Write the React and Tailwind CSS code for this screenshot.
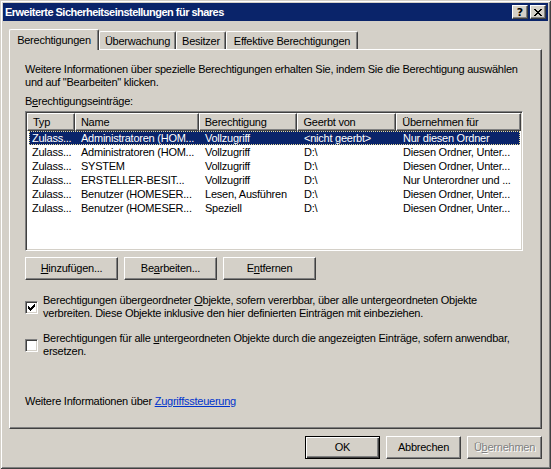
import React from 'react';

const raised =
  'border border-t-white border-l-white border-r-[#404040] border-b-[#404040] shadow-[inset_-1px_-1px_0_#808080]';

const columns = [
  { label: 'Typ', w: 'w-[48px]' },
  { label: 'Name', w: 'w-[124px]' },
  { label: 'Berechtigung', w: 'w-[99px]' },
  { label: 'Geerbt von', w: 'w-[99px]' },
  { label: 'Übernehmen für', w: 'w-[125px]' },
];

const rows = [
  ['Zulass...', 'Administratoren (HOM...', 'Vollzugriff', '<nicht geerbt>', 'Nur diesen Ordner'],
  ['Zulass...', 'Administratoren (HOM...', 'Vollzugriff', 'D:\\', 'Diesen Ordner, Unter...'],
  ['Zulass...', 'SYSTEM', 'Vollzugriff', 'D:\\', 'Diesen Ordner, Unter...'],
  ['Zulass...', 'ERSTELLER-BESIT...', 'Vollzugriff', 'D:\\', 'Nur Unterordner und ...'],
  ['Zulass...', 'Benutzer (HOMESER...', 'Lesen, Ausführen', 'D:\\', 'Diesen Ordner, Unter...'],
  ['Zulass...', 'Benutzer (HOMESER...', 'Speziell', 'D:\\', 'Diesen Ordner, Unter...'],
];

const rowWidths = ['w-[46px]', 'w-[124px]', 'w-[99px]', 'w-[99px]', 'w-[123px]'];

const PushButton = ({ children, className = '' }) => (
  <div className={`${raised} h-[23px] flex items-center justify-center bg-[#d4d0c8] ${className}`}>
    {children}
  </div>
);

const Checkbox = ({ checked }) => (
  <div className="w-[13px] h-[13px] shrink-0 bg-white border border-t-[#808080] border-l-[#808080] border-r-white border-b-white shadow-[inset_1px_1px_0_#404040,inset_-1px_-1px_0_#d4d0c8] flex items-center justify-center">
    {checked && (
      <svg width="7" height="7" viewBox="0 0 7 7" shapeRendering="crispEdges">
        <path d="M0 2 L2 4 L7 -1 L7 2 L2 7 L0 5 Z" fill="#000" />
      </svg>
    )}
  </div>
);

export default function App() {
  return (
    <div className="w-[551px] h-[469px] overflow-hidden bg-[#d4d0c8] p-[3px] flex flex-col text-black text-[11px] leading-[13px] tracking-[-0.24px] font-['Liberation_Sans',Arial,sans-serif] shadow-[inset_1px_1px_0_#d4d0c8,inset_-1px_-1px_0_#404040,inset_2px_2px_0_#ffffff,inset_-2px_-2px_0_#808080]">
      {/* Title bar */}
      <div className="h-[18px] bg-[#0a246a] flex items-center pl-[2px] pr-[2px]">
        <span className="text-white font-bold tracking-[-0.52px]">Erweiterte Sicherheitseinstellungen für shares</span>
        <div className="ml-auto flex gap-[2px]">
          <div className={`${raised} w-[16px] h-[14px] bg-[#d4d0c8] flex items-center justify-center`}>
            <span className="font-bold text-[11px] leading-[11px] tracking-normal font-['DejaVu_Sans',sans-serif]">?</span>
          </div>
          <div className={`${raised} w-[16px] h-[14px] bg-[#d4d0c8] flex items-center justify-center`}>
            <svg width="8" height="7" viewBox="0 0 8 7" shapeRendering="crispEdges">
              <path d="M0 0h2v1h-2z M6 0h2v1h-2z M1 1h2v1h-2z M5 1h2v1h-2z M2 2h4v1h-4z M3 3h2v1h-2z M2 4h4v1h-4z M1 5h2v1h-2z M5 5h2v1h-2z M0 6h2v1h-2z M6 6h2v1h-2z" fill="#000" />
            </svg>
          </div>
        </div>
      </div>

      {/* Tabs */}
      <div className="ml-[6px] mt-[8px] h-[20px] flex items-end relative z-10">
        <div className="w-[90px] h-[21px] -mb-px bg-[#d4d0c8] border-l border-t border-white border-r border-r-[#404040] shadow-[inset_-1px_0_0_#808080] rounded-t-[2px] flex justify-center pt-[4px]">
          Berechtigungen
        </div>
        <div className="w-[77px] h-[18px] border-l border-t border-white border-r border-r-[#404040] shadow-[inset_-1px_0_0_#808080] rounded-t-[2px] flex justify-center pt-[3px]">
          Überwachung
        </div>
        <div className="w-[50px] h-[18px] border-l border-t border-white border-r border-r-[#404040] shadow-[inset_-1px_0_0_#808080] rounded-t-[2px] flex justify-center pt-[3px]">
          Besitzer
        </div>
        <div className="w-[132px] h-[18px] border-l border-t border-white border-r border-r-[#404040] shadow-[inset_-1px_0_0_#808080] rounded-t-[2px] flex justify-center pt-[3px]">
          Effektive Berechtigungen
        </div>
      </div>

      {/* Tab panel */}
      <div className={`${raised} ml-[6px] w-[533px] h-[380px] px-[15px] pt-[13px] flex flex-col`}>
        <p className="whitespace-nowrap">
          Weitere Informationen über spezielle Berechtigungen erhalten Sie, indem Sie die Berechtigung auswählen
          <br />
          und auf "Bearbeiten" klicken.
        </p>
        <div className="mt-[6px]">
          B<span className="underline">e</span>rechtigungseinträge:
        </div>

        {/* List view */}
        <div className="mt-[3px] w-[498px] h-[140px] bg-white border border-t-[#808080] border-l-[#808080] border-r-white border-b-white shadow-[inset_1px_1px_0_#404040,inset_-1px_-1px_0_#d4d0c8] p-px">
          <div className="flex h-[18px]">
            {columns.map((c) => (
              <div
                key={c.label}
                className={`${c.w} h-[18px] bg-[#d4d0c8] border border-t-white border-l-white border-r-[#404040] border-b-[#404040] shadow-[inset_-1px_-1px_0_#808080] pl-[5px] flex items-center whitespace-nowrap`}
              >
                {c.label}
              </div>
            ))}
          </div>
          {rows.map((r, i) => (
            <div key={i} className="flex h-[14px] leading-[14px]">
              <div className="w-[2px]" />
              <div
                className={`flex ${i === 0 ? 'bg-[#0a246a] text-white outline outline-1 outline-dotted outline-[#e8dc9a] -outline-offset-1' : ''}`}
              >
                {r.map((cell, j) => (
                  <div key={j} className={`${rowWidths[j]} ${j === 0 ? 'pl-[3px]' : 'pl-[6px]'} whitespace-nowrap overflow-hidden`}>
                    {cell}
                  </div>
                ))}
              </div>
            </div>
          ))}
        </div>

        {/* Buttons */}
        <div className="mt-[6px] flex gap-[6px]">
          <PushButton className="w-[93px]">
            <span>
              <span className="underline">H</span>inzufügen...
            </span>
          </PushButton>
          <PushButton className="w-[93px]">
            <span>
              Be<span className="underline">a</span>rbeiten...
            </span>
          </PushButton>
          <PushButton className="w-[93px]">
            <span>
              E<span className="underline">n</span>tfernen
            </span>
          </PushButton>
        </div>

        {/* Checkboxes */}
        <div className="mt-[14px] flex items-center gap-[5px]">
          <Checkbox checked />
          <div className="whitespace-nowrap">
            Berechtigungen übergeordneter <span className="underline">O</span>bjekte, sofern vererbbar, über alle untergeordneten Objekte
            <br />
            verbreiten. Diese Objekte inklusive den hier definierten Einträgen mit einbeziehen.
          </div>
        </div>
        <div className="mt-[12px] flex items-center gap-[5px]">
          <Checkbox />
          <div className="whitespace-nowrap">
            Berechtigungen für alle <span className="underline">u</span>ntergeordneten Objekte durch die angezeigten Einträge, sofern anwendbar,
            <br />
            ersetzen.
          </div>
        </div>

        <div className="mt-[37px] whitespace-nowrap">
          Weitere Informationen über <span className="text-[#0033cc] underline">Zugriffssteuerung</span>
        </div>
      </div>

      {/* Dialog buttons */}
      <div className="ml-[6px] w-[533px] mt-[7px] flex justify-end gap-[6px]">
        <div className="w-[75px] h-[23px] border border-black shadow-[inset_1px_1px_0_#ffffff,inset_-1px_-1px_0_#404040,inset_-2px_-2px_0_#808080] flex items-center justify-center">
          OK
        </div>
        <PushButton className="w-[75px]">Abbrechen</PushButton>
        <PushButton className="w-[75px]">
          <span className="text-[#808080] [text-shadow:1px_1px_0_#ffffff]">
            Ü<span className="underline">b</span>ernehmen
          </span>
        </PushButton>
      </div>
    </div>
  );
}
